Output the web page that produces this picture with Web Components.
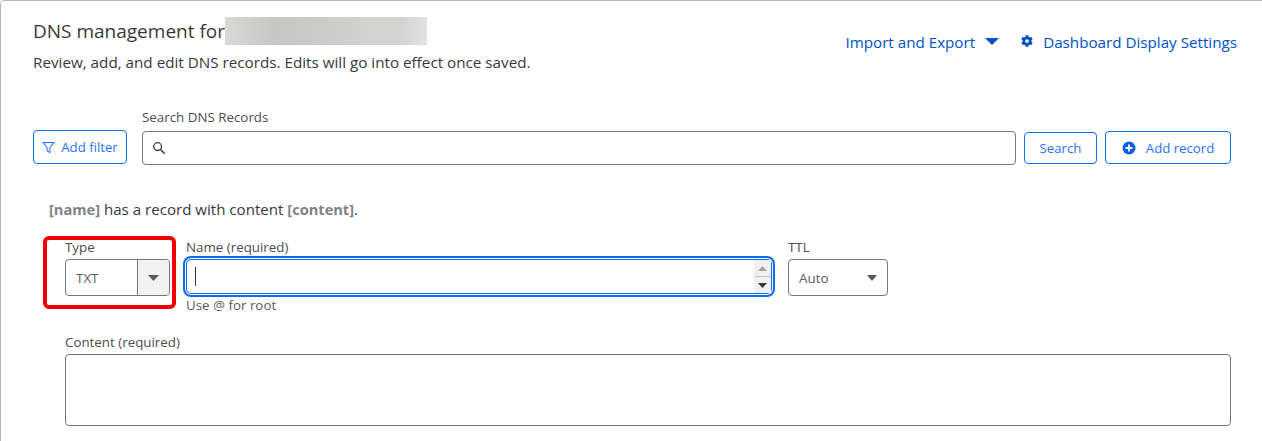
<!DOCTYPE html>
<html>
<head>
<meta charset="utf-8">
<title>DNS management</title>
<style>
html, body { margin: 0; padding: 0; background: #fff; }
body { font-family: "Open Sans", "Liberation Sans", sans-serif; color: #36393a; overflow: hidden; height: 441px; }
</style>
</head>
<body>
<dns-page></dns-page>

<script>
class DnsButton extends HTMLElement {
    connectedCallback() {
        let shadowRoot = this.attachShadow({mode: 'open'});
        shadowRoot.innerHTML = `
            <style>
:host {
    display: flex;
    align-items: center;
    justify-content: center;
    gap: var(--gap, 5px);
    box-sizing: border-box;
    height: var(--h, 34px);
    width: var(--w, auto);
    border: 1px solid #0a72f5;
    border-radius: 4px;
    color: #1f72ff;
    font-size: 13.2px;
    background: #fff;
}
</style>
            <slot name="icon"></slot><slot></slot>
    `;
    }
}

class DnsField extends HTMLElement {
    connectedCallback() {
        let shadowRoot = this.attachShadow({mode: 'open'});
        shadowRoot.innerHTML = `
            <style>
:host {
    display: block;
    font-size: 13.35px;
    color: #4a4d4f;
}
.label {
    height: 17px;
    line-height: 17px;
    margin-bottom: var(--label-gap, 5px);
}
.hint {
    margin-top: 2px;
    line-height: 18px;
    color: #595b5d;
}
</style>
            <div class="label">${this.getAttribute('label')}</div>
            <slot></slot>
            ${this.hasAttribute('hint') ? `<div class="hint">${this.getAttribute('hint')}</div>` : ''}
    `;
    }
}

class DnsHeader extends HTMLElement {
    connectedCallback() {
        let shadowRoot = this.attachShadow({mode: 'open'});
        shadowRoot.innerHTML = `
            <style>
:host {
    display: flex;
    justify-content: space-between;
    align-items: flex-start;
}
h1 {
    display: flex;
    margin: 0;
    font-size: 19px;
    font-weight: 400;
    line-height: 28px;
    color: #36393a;
}
.blur {
    width: 202px;
    height: 28px;
    background: linear-gradient(90deg, #d8d8d6 0%, #c6c6c5 25%, #cbcbca 50%, #d2d2d1 70%, #d3d3d2 88%, #e2e3e2 100%);
}
p {
    margin: 5px 0 0;
    font-size: 15.23px;
    line-height: 24px;
    color: #36393a;
}
.links {
    display: flex;
    align-items: center;
    margin: 13px 25px 0 0;
    color: #0051c3;
    font-size: 15.2px;
    line-height: 24px;
}
.arrow { margin: 0 22px 2px 10px; }
.gear { margin: 0 10px 2px 0; }
svg { display: block; }
</style>
            <div>
                <h1>DNS management for <span class="blur"></span></h1>
                <p>Review, add, and edit DNS records. Edits will go into effect once saved.</p>
            </div>
            <div class="links">
                <span>Import and Export</span>
                <svg class="arrow" width="14" height="7" viewBox="0 0 14 8" preserveAspectRatio="none"><path d="M0 0h14L7 8z" fill="#0051c3"/></svg>
                <svg class="gear" width="12" height="12" viewBox="0 0 512 512"><path fill="#0051c3" d="M487 316l-42-25a190 190 0 0 0 0-70l42-25c5-3 7-9 5-14a248 248 0 0 0-55-94c-4-4-10-5-15-3l-42 25a190 190 0 0 0-61-35V26c0-6-4-11-9-12a250 250 0 0 0-109 0c-5 1-9 6-9 12v49a190 190 0 0 0-61 35L89 86c-5-3-11-2-15 2a247 247 0 0 0-55 94c-2 5 0 11 5 14l42 25a190 190 0 0 0 0 70l-42 25c-5 3-7 9-5 14 11 35 30 67 55 94 4 4 10 5 15 3l42-25a190 190 0 0 0 61 35v49c0 6 4 11 9 12a250 250 0 0 0 109 0c5-1 9-6 9-12v-49a190 190 0 0 0 61-35l42 25c5 3 11 2 15-2a247 247 0 0 0 55-94c2-6 0-12-5-15zM256 336a80 80 0 1 1 0-160 80 80 0 0 1 0 160z"/></svg>
                <span>Dashboard Display Settings</span>
            </div>
    `;
    }
}

class DnsSearchBar extends HTMLElement {
    connectedCallback() {
        let shadowRoot = this.attachShadow({mode: 'open'});
        shadowRoot.innerHTML = `
            <style>
:host {
    display: flex;
    align-items: flex-end;
    margin-top: 35px;
}
.input {
    display: flex;
    align-items: center;
    box-sizing: border-box;
    height: 34px;
    border: 1px solid #767676;
    border-radius: 4px;
    padding-left: 9px;
}
dns-field { flex: 1; margin: 0 8px 0 15px; }
svg { display: block; }
</style>
            <dns-button style="--w:94px;--h:34px;--gap:6px;margin-bottom:1px">
                <svg slot="icon" width="13" height="13" viewBox="0 0 14 14"><path d="M1 1.5h12L8.5 7v5.5l-3-2V7z" fill="none" stroke="#1f72ff" stroke-width="1.1" stroke-linejoin="round"/></svg>
                Add filter
            </dns-button>
            <dns-field label="Search DNS Records">
                <div class="input">
                    <svg width="14" height="14" viewBox="0 0 14 14"><circle cx="5.6" cy="5.6" r="3.9" fill="none" stroke="#36393a" stroke-width="1.3"/><path d="M8.5 8.5l4.2 4.2" stroke="#36393a" stroke-width="1.5"/></svg>
                </div>
            </dns-field>
            <dns-button style="--w:73px;--h:32px;margin:0 8px 1px 0">Search</dns-button>
            <dns-button style="--w:126px;--h:33px;--gap:10px;margin:0 31px 1px 0">
                <svg slot="icon" width="14" height="14" viewBox="0 0 14 14"><circle cx="7" cy="7" r="6.5" fill="#0a5fe0"/><path d="M7 3.5v7M3.5 7h7" stroke="#fff" stroke-width="1.8"/></svg>
                Add record
            </dns-button>
    `;
    }
}

class DnsRecordForm extends HTMLElement {
    connectedCallback() {
        let shadowRoot = this.attachShadow({mode: 'open'});
        shadowRoot.innerHTML = `
            <style>
:host {
    display: block;
    position: relative;
    margin: 32px 31px 0 16px;
    --label-gap: 3px;
}
.sentence {
    font-size: 15.1px;
    line-height: 24px;
    color: #36393a;
}
.sentence b { color: #808285; font-weight: 700; font-size: 14.6px; }
.row {
    display: flex;
    align-items: flex-start;
    margin: 18px 0 0 16px;
}
.select {
    display: flex;
    box-sizing: border-box;
    height: 37px;
    border: 1px solid #767676;
    border-radius: 4px;
    font-size: 13.4px;
    color: #5b5d5f;
    align-items: center;
}
.type { width: 105px; }
.type .value { flex: 1; padding-left: 10px; }
.type .drop {
    width: 31px;
    height: 100%;
    border-left: 1px solid #767676;
    background: #f2f2f2;
    border-radius: 0 3px 3px 0;
    display: flex;
    align-items: center;
    justify-content: center;
}
.ttl { width: 100px; justify-content: space-between; padding: 0 10px; }
.name-wrap { margin-left: 16px; flex: none; width: 586px; }
.name {
    display: flex;
    box-sizing: border-box;
    height: 35px;
    border-radius: 5px;
    border: 1px solid #0a6cf0;
    box-shadow: 0 0 0 1px #fff, 0 0 0 3px #0a6cf0;
    align-items: center;
    justify-content: space-between;
}
.caret { width: 1px; height: 19px; background: #36393a; margin-left: 8px; }
.spin {
    display: flex;
    flex-direction: column;
    width: 17px;
    height: 100%;
    background: #f0f0f0;
}
.spin div { flex: 1; display: flex; align-items: center; justify-content: center; }
.spin div:first-child { border-bottom: 1px solid #c4c4c4; }
.ttl-wrap { margin-left: 16px; }
.content { margin: 20px 0 0 16px; }
.area {
    box-sizing: border-box;
    height: 72px;
    border: 1px solid #767676;
    border-radius: 4px;
}
.marker {
    position: absolute;
    left: -6px;
    top: 39px;
    width: 133px;
    height: 73px;
    box-sizing: border-box;
    border: 4px solid #ee0000;
    border-radius: 6px;
}
svg { display: block; }
</style>
            <div class="sentence"><b>[name]</b> has a record with content <b>[content]</b>.</div>
            <div class="row">
                <dns-field label="Type">
                    <div class="select type">
                        <span class="value">TXT</span>
                        <span class="drop"><svg width="11" height="6" viewBox="0 0 11 6"><path d="M0 0h11L5.5 6z" fill="#595b5d"/></svg></span>
                    </div>
                </dns-field>
                <dns-field class="name-wrap" label="Name (required)" hint="Use @ for root">
                    <div class="name">
                        <span class="caret"></span>
                        <span class="spin">
                            <div><svg width="9" height="5" viewBox="0 0 9 5"><path d="M4.5 0L9 5H0z" fill="#a3a3a3"/></svg></div>
                            <div><svg width="9" height="5" viewBox="0 0 9 5"><path d="M0 0h9L4.5 5z" fill="#36393a"/></svg></div>
                        </span>
                    </div>
                </dns-field>
                <dns-field class="ttl-wrap" label="TTL">
                    <div class="select ttl">
                        <span>Auto</span>
                        <svg width="10" height="6" viewBox="0 0 10 6"><path d="M0 0h10L5 6z" fill="#595b5d"/></svg>
                    </div>
                </dns-field>
            </div>
            <dns-field class="content" label="Content (required)">
                <div class="area"></div>
            </dns-field>
            <div class="marker"></div>
    `;
    }
}

class DnsPage extends HTMLElement {
    connectedCallback() {
        let shadowRoot = this.attachShadow({mode: 'open'});
        shadowRoot.innerHTML = `
            <style>
:host {
    display: block;
    box-sizing: border-box;
    height: 460px;
    padding: 16px 0 0 32px;
    border-top: 1px solid #b5b5b5;
    border-left: 1px solid #b5b5b5;
    border-top-left-radius: 5px;
}
</style>
            <dns-header></dns-header>
            <dns-search-bar></dns-search-bar>
            <dns-record-form></dns-record-form>
    `;
    }
}

window.customElements.define('dns-button', DnsButton)
window.customElements.define('dns-field', DnsField)
window.customElements.define('dns-header', DnsHeader)
window.customElements.define('dns-search-bar', DnsSearchBar)
window.customElements.define('dns-record-form', DnsRecordForm)
window.customElements.define('dns-page', DnsPage)
</script>
</body>
</html>
